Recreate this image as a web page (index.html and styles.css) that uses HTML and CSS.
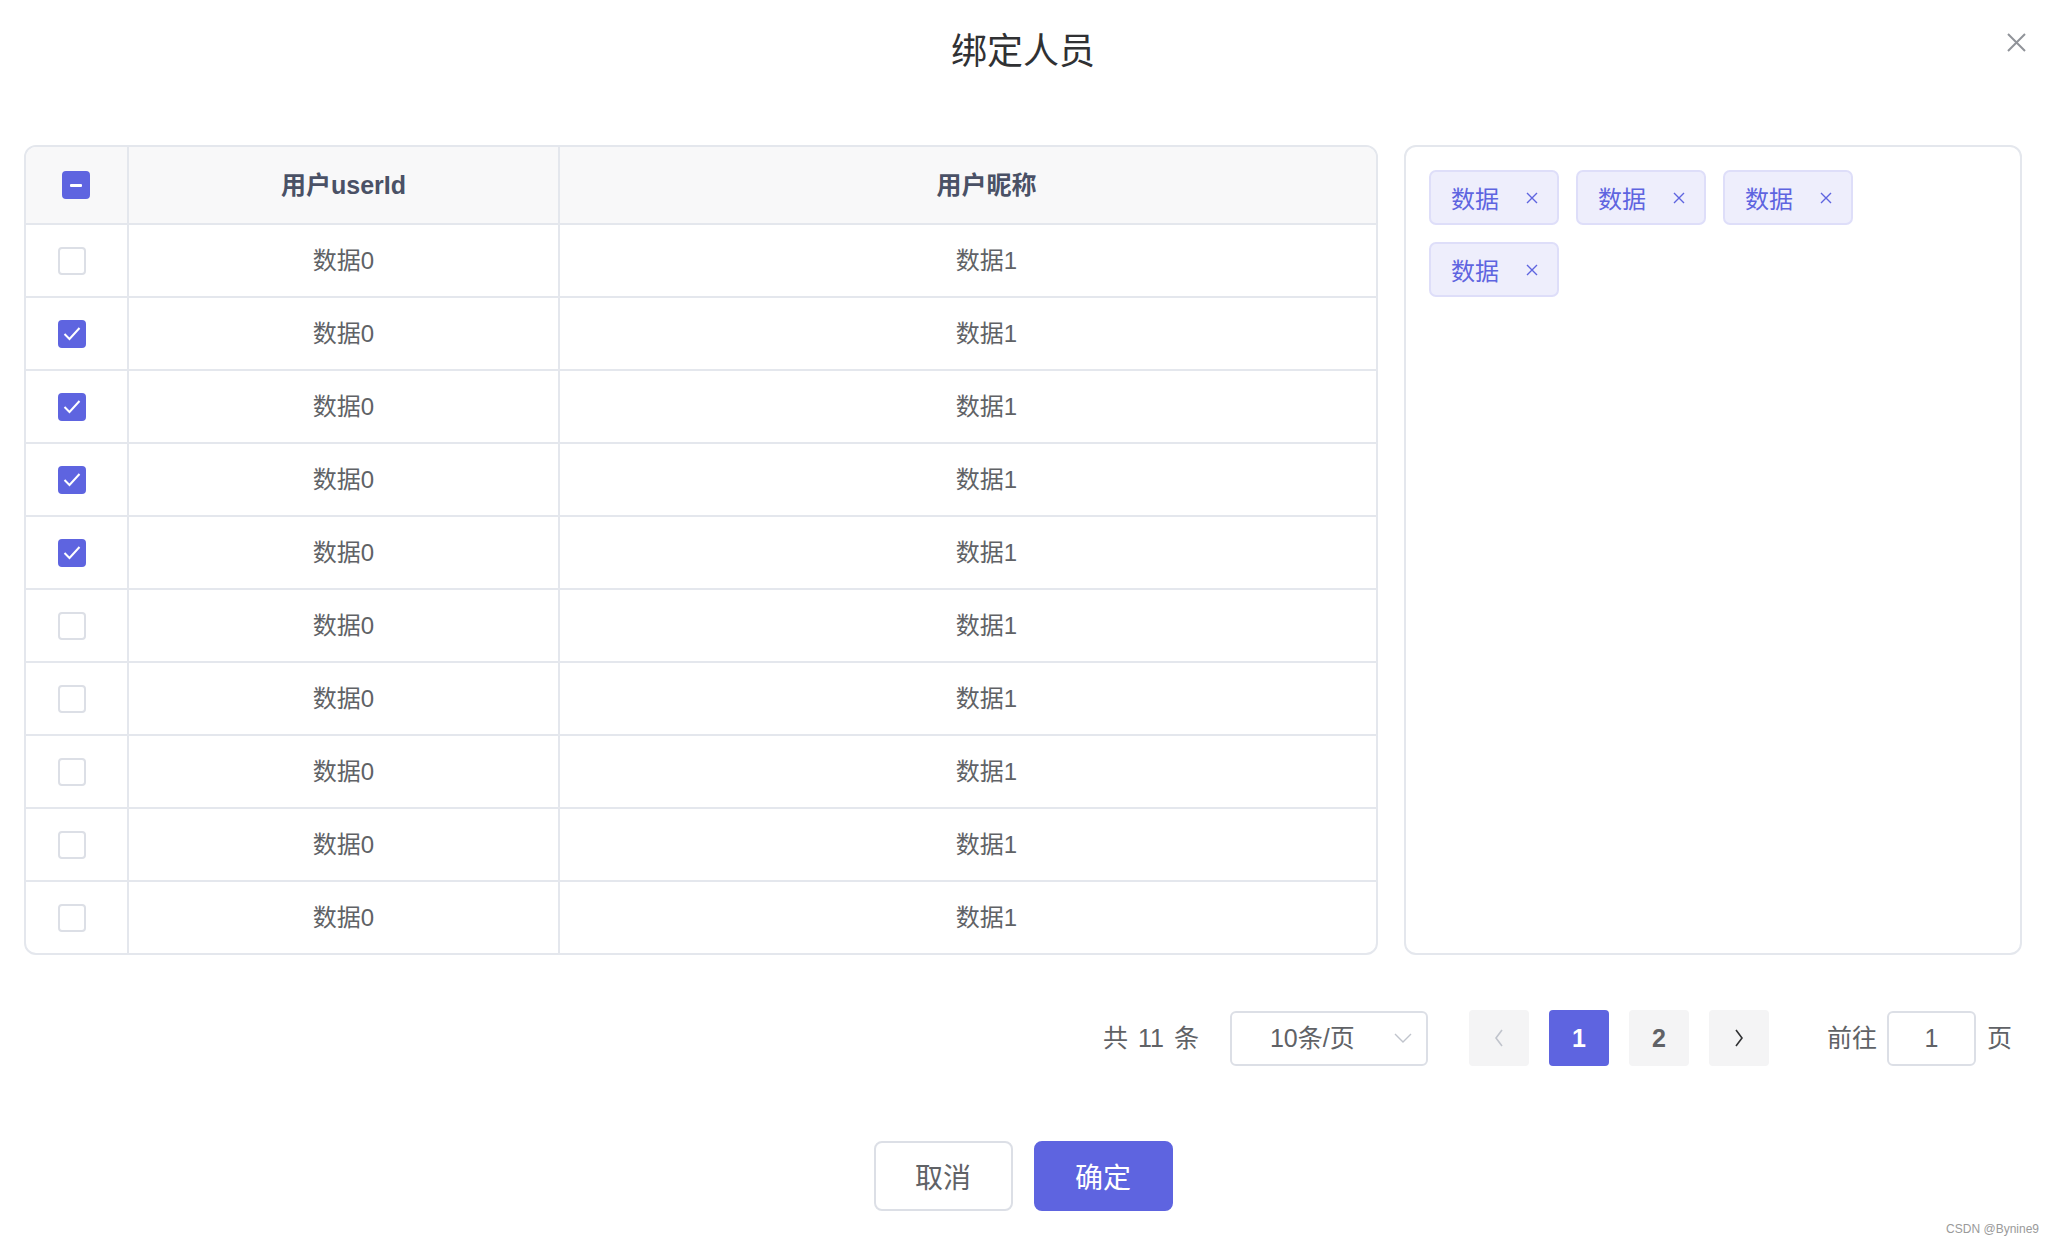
FILE: index.html
```html
<!DOCTYPE html>
<html lang="zh-CN">
<head>
<meta charset="utf-8">
<title>绑定人员</title>
<link rel="stylesheet" href="styles.css">
</head>
<body>
<div class="dialog">
  <div class="dialog-header">
    <h1 class="dialog-title">绑定人员</h1>
    <button class="dialog-close" aria-label="关闭">
      <svg width="19" height="19" viewBox="0 0 19 19"><path d="M1 1 L18 18 M18 1 L1 18" stroke="#909399" stroke-width="2" fill="none"/></svg>
    </button>
  </div>

  <div class="main">
    <div class="table">
      <div class="row head">
        <div class="cell c1"><span class="cb cb-ind head-cb"><span class="minus"></span></span></div>
        <div class="cell c2">用户userId</div>
        <div class="cell c3">用户昵称</div>
      </div>
      <div class="row"><div class="cell c1"><span class="cb"></span></div><div class="cell c2">数据0</div><div class="cell c3">数据1</div></div>
      <div class="row"><div class="cell c1"><span class="cb cb-on"><svg width="24" height="24" viewBox="0 0 24 24"><path d="M4.5 12 L9.5 17 L19.5 6" stroke="#fff" stroke-width="2" fill="none"/></svg></span></div><div class="cell c2">数据0</div><div class="cell c3">数据1</div></div>
      <div class="row"><div class="cell c1"><span class="cb cb-on"><svg width="24" height="24" viewBox="0 0 24 24"><path d="M4.5 12 L9.5 17 L19.5 6" stroke="#fff" stroke-width="2" fill="none"/></svg></span></div><div class="cell c2">数据0</div><div class="cell c3">数据1</div></div>
      <div class="row"><div class="cell c1"><span class="cb cb-on"><svg width="24" height="24" viewBox="0 0 24 24"><path d="M4.5 12 L9.5 17 L19.5 6" stroke="#fff" stroke-width="2" fill="none"/></svg></span></div><div class="cell c2">数据0</div><div class="cell c3">数据1</div></div>
      <div class="row"><div class="cell c1"><span class="cb cb-on"><svg width="24" height="24" viewBox="0 0 24 24"><path d="M4.5 12 L9.5 17 L19.5 6" stroke="#fff" stroke-width="2" fill="none"/></svg></span></div><div class="cell c2">数据0</div><div class="cell c3">数据1</div></div>
      <div class="row"><div class="cell c1"><span class="cb"></span></div><div class="cell c2">数据0</div><div class="cell c3">数据1</div></div>
      <div class="row"><div class="cell c1"><span class="cb"></span></div><div class="cell c2">数据0</div><div class="cell c3">数据1</div></div>
      <div class="row"><div class="cell c1"><span class="cb"></span></div><div class="cell c2">数据0</div><div class="cell c3">数据1</div></div>
      <div class="row"><div class="cell c1"><span class="cb"></span></div><div class="cell c2">数据0</div><div class="cell c3">数据1</div></div>
      <div class="row last"><div class="cell c1"><span class="cb"></span></div><div class="cell c2">数据0</div><div class="cell c3">数据1</div></div>
    </div>

    <div class="panel">
      <div class="tags">
        <span class="tag">数据<svg class="tag-x" width="12" height="12" viewBox="0 0 12 12"><path d="M1 1 L11 11 M11 1 L1 11" stroke="#5e64e0" stroke-width="1.4" fill="none"/></svg></span>
        <span class="tag">数据<svg class="tag-x" width="12" height="12" viewBox="0 0 12 12"><path d="M1 1 L11 11 M11 1 L1 11" stroke="#5e64e0" stroke-width="1.4" fill="none"/></svg></span>
        <span class="tag">数据<svg class="tag-x" width="12" height="12" viewBox="0 0 12 12"><path d="M1 1 L11 11 M11 1 L1 11" stroke="#5e64e0" stroke-width="1.4" fill="none"/></svg></span>
        <span class="tag">数据<svg class="tag-x" width="12" height="12" viewBox="0 0 12 12"><path d="M1 1 L11 11 M11 1 L1 11" stroke="#5e64e0" stroke-width="1.4" fill="none"/></svg></span>
      </div>
    </div>
  </div>

  <div class="pager">
    <span class="total">共 11 条</span>
    <span class="sizes">10条/页<svg class="sizes-arrow" width="18" height="10" viewBox="0 0 18 10"><path d="M1 1 L9 9 L17 1" stroke="#c0c4cc" stroke-width="1.4" fill="none"/></svg></span>
    <span class="pbtn prev"><svg width="10" height="18" viewBox="0 0 10 18"><path d="M8 1 L2 9 L8 17" stroke="#c0c4cc" stroke-width="1.6" fill="none"/></svg></span>
    <span class="pbtn active">1</span>
    <span class="pbtn">2</span>
    <span class="pbtn next"><svg width="10" height="18" viewBox="0 0 10 18"><path d="M2 1 L8 9 L2 17" stroke="#303133" stroke-width="1.6" fill="none"/></svg></span>
    <span class="jump">前往</span>
    <span class="jump-input">1</span>
    <span class="jump-end">页</span>
  </div>

  <div class="footer">
    <button class="btn btn-cancel">取消</button>
    <button class="btn btn-ok">确定</button>
  </div>

  <div class="watermark">CSDN @Bynine9</div>
</div>
</body>
</html>
```
FILE: styles.css
```css
* { box-sizing: border-box; }
html, body { margin: 0; padding: 0; background: #fff; }
body {
  font-family: "Liberation Sans", "Noto Sans CJK SC", sans-serif;
  color: #606266;
  width: 2054px;
  height: 1244px;
  overflow: hidden;
}
.dialog { position: relative; width: 2054px; height: 1244px; }

.dialog-header {
  height: 96px;
  display: flex;
  align-items: center;
  justify-content: center;
  padding-right: 8px;
}
.dialog-title {
  margin: 0;
  font-size: 36px;
  font-weight: normal;
  line-height: 1;
  color: #303133;
  font-family: "Noto Sans CJK SC", sans-serif;
}
.dialog-close {
  position: absolute;
  top: 33px;
  right: 28px;
  width: 19px;
  height: 19px;
  padding: 0;
  border: 0;
  background: none;
  display: block;
}
.dialog-close svg { display: block; }

.main {
  margin-top: 49px;
  height: 810px;
  display: flex;
  gap: 26px;
  padding: 0 32px 0 24px;
}

.table {
  width: 1354px;
  height: 810px;
  border: 2px solid #e4e7ed;
  border-radius: 12px;
  overflow: hidden;
  display: flex;
  flex-direction: column;
}
.row {
  display: flex;
  height: 73px;
  border-bottom: 2px solid #e4e7ed;
  font-size: 24px;
  color: #606266;
}
.row.last { height: 71px; border-bottom: 0; }
.row.head {
  height: 78px;
  background: #f8f8f9;
  font-weight: bold;
  color: #4a5166;
  font-size: 25px;
}
.cell {
  display: flex;
  align-items: center;
  justify-content: center;
  line-height: 1;
}
.c1 { width: 103px; border-right: 2px solid #e4e7ed; padding-right: 10px; }
.head .c1 { padding-right: 1px; }
.c2 { width: 431px; border-right: 2px solid #e4e7ed; }
.c3 { flex: 1; padding-left: 37px; }

.cb {
  width: 28px;
  height: 28px;
  border: 2px solid #dcdfe6;
  border-radius: 4px;
  background: #fff;
  display: flex;
  align-items: center;
  justify-content: center;
}
.cb-on, .cb-ind { background: #5e64e0; border-color: #5e64e0; }
.cb svg { display: block; }
.minus { width: 12px; height: 3px; background: #fff; border-radius: 1px; }

.panel {
  flex: 1;
  height: 810px;
  border: 2px solid #e4e7ed;
  border-radius: 12px;
  padding: 23px;
}
.tags { display: flex; flex-wrap: wrap; row-gap: 17px; }
.tag {
  display: inline-flex;
  align-items: center;
  height: 55px;
  padding: 0 19px 0 20px;
  margin-right: 17px;
  background: #eeeefc;
  border: 2px solid #dedef9;
  border-radius: 7px;
  color: #5e64e0;
  font-size: 24px;
  line-height: 1;
  font-family: "Noto Sans CJK SC", sans-serif;
}
.tag-x { margin-left: 27px; display: block; }

.pager {
  margin-top: 55px;
  height: 56px;
  display: flex;
  align-items: center;
  justify-content: flex-end;
  padding-right: 42px;
  font-size: 25px;
  line-height: 1;
  color: #606266;
}
.total { margin-right: 31px; word-spacing: 3px; }
.sizes {
  width: 198px;
  height: 55px;
  border: 2px solid #dcdfe6;
  border-radius: 6px;
  display: flex;
  align-items: center;
  padding-left: 38px;
  margin-right: 41px;
  color: #606266;
}
.sizes-arrow { margin-left: auto; margin-right: 14px; display: block; }
.pbtn {
  width: 60px;
  height: 56px;
  background: #f4f4f5;
  border-radius: 4px;
  display: flex;
  align-items: center;
  justify-content: center;
  font-weight: bold;
  color: #606266;
  margin-right: 20px;
}
.pbtn svg { display: block; }
.pbtn.active { background: #5e64e0; color: #fff; }
.pbtn.next { margin-right: 58px; }
.jump { margin-right: 10px; }
.jump-input {
  width: 89px;
  height: 55px;
  border: 2px solid #dcdfe6;
  border-radius: 6px;
  display: flex;
  align-items: center;
  justify-content: center;
  margin-right: 11px;
}

.footer {
  margin-top: 75px;
  display: flex;
  justify-content: center;
  gap: 21px;
  padding-right: 8px;
}
.btn {
  width: 139px;
  height: 70px;
  border-radius: 8px;
  font-size: 28px;
  line-height: 1;
  font-family: "Noto Sans CJK SC", sans-serif;
  padding: 0;
}
.btn-cancel { background: #fff; border: 2px solid #dcdfe6; color: #606266; }
.btn-ok { background: #5e64e0; border: 2px solid #5e64e0; color: #fff; }

.watermark {
  position: absolute;
  right: 15px;
  top: 1222px;
  font-size: 12px;
  color: #9a9a9a;
  font-family: "Liberation Sans", sans-serif;
}
```
